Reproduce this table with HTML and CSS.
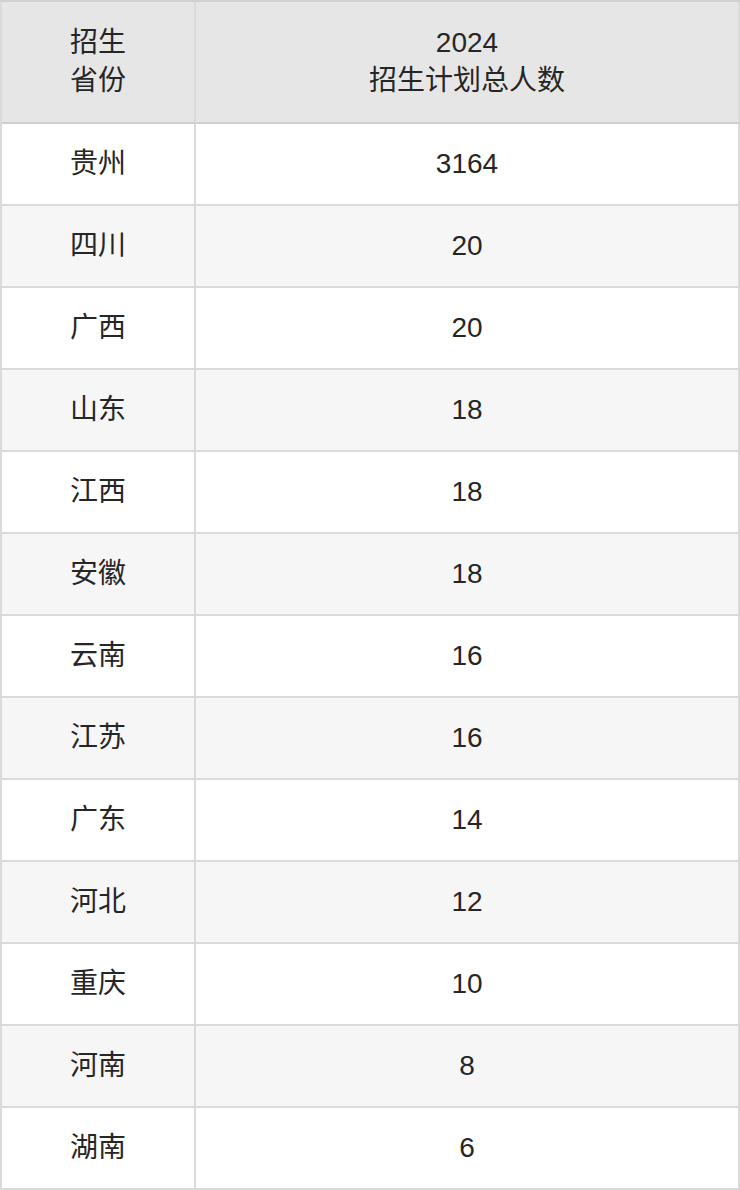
FILE: index.html
```html
<!DOCTYPE html>
<html lang="zh">
<head>
<meta charset="utf-8">
<title>招生计划</title>
<link rel="stylesheet" href="styles.css">
</head>
<body>
<table class="plan">
  <thead>
    <tr>
      <th class="col-prov">招生<br>省份</th>
      <th class="col-num">2024<br>招生计划总人数</th>
    </tr>
  </thead>
  <tbody>
    <tr><td>贵州</td><td>3164</td></tr>
    <tr><td>四川</td><td>20</td></tr>
    <tr><td>广西</td><td>20</td></tr>
    <tr><td>山东</td><td>18</td></tr>
    <tr><td>江西</td><td>18</td></tr>
    <tr><td>安徽</td><td>18</td></tr>
    <tr><td>云南</td><td>16</td></tr>
    <tr><td>江苏</td><td>16</td></tr>
    <tr><td>广东</td><td>14</td></tr>
    <tr><td>河北</td><td>12</td></tr>
    <tr><td>重庆</td><td>10</td></tr>
    <tr><td>河南</td><td>8</td></tr>
    <tr><td>湖南</td><td>6</td></tr>
  </tbody>
</table>
</body>
</html>
```
FILE: styles.css
```css
html, body {
  margin: 0;
  padding: 0;
  background: #ffffff;
}

.plan {
  width: 740px;
  border-collapse: separate;
  border-spacing: 0;
  border-top: 2px solid #d0d0d0;
  border-left: 2px solid #dadada;
  font-family: "Liberation Sans", "Noto Sans CJK SC", sans-serif;
  font-size: 28px;
  color: #262626;
  table-layout: fixed;
}

.plan th,
.plan td {
  padding: 0;
  text-align: center;
  vertical-align: middle;
  border-right: 2px solid #dadada;
  border-bottom: 2px solid #dadada;
  font-weight: normal;
}

.plan th {
  background: #e6e6e6;
  height: 120px;
  line-height: 38px;
  border-bottom-color: #cfcfcf;
}

.col-prov {
  width: 192px;
}

.plan td {
  height: 80px;
  line-height: 32px;
}

.plan tbody tr:nth-child(even) td {
  background: #f6f6f6;
}
```
